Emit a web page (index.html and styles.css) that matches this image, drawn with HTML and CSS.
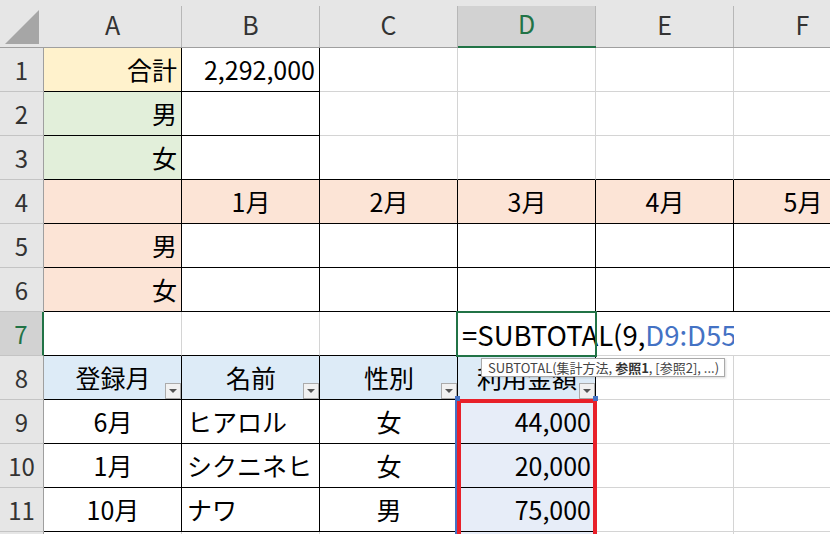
FILE: index.html
```html
<!DOCTYPE html>
<html lang="ja">
<head>
    <meta charset="UTF-8">
    <title>SUBTOTAL</title>
    <link rel="stylesheet" href="styles.css">
</head>
<body>
    <div class="sheet">
        <!-- 列見出し -->
        <div class="corner">
            <svg width="44" height="48" viewBox="0 0 44 48"><polygon points="39,10 39,44 5,44" fill="#a6a6a6"/></svg>
        </div>
        <div class="col-head"><span>A</span></div>
        <div class="col-head"><span>B</span></div>
        <div class="col-head"><span>C</span></div>
        <div class="col-head sel"><span>D</span></div>
        <div class="col-head"><span>E</span></div>
        <div class="col-head"><span>F</span></div>

        <!-- 1 -->
        <div class="row-head">1</div>
        <div class="c k yellow right">合計</div>
        <div class="c k right">2,292,000</div>
        <div class="c"></div>
        <div class="c"></div>
        <div class="c"></div>
        <div class="c"></div>

        <!-- 2 -->
        <div class="row-head">2</div>
        <div class="c k green right">男</div>
        <div class="c k"></div>
        <div class="c"></div>
        <div class="c"></div>
        <div class="c"></div>
        <div class="c"></div>

        <!-- 3 -->
        <div class="row-head">3</div>
        <div class="c k green right">女</div>
        <div class="c k"></div>
        <div class="c kb"></div>
        <div class="c kb"></div>
        <div class="c kb"></div>
        <div class="c kb"></div>

        <!-- 4 -->
        <div class="row-head">4</div>
        <div class="c k peach"></div>
        <div class="c k peach center">1月</div>
        <div class="c k peach center">2月</div>
        <div class="c k peach center">3月</div>
        <div class="c k peach center">4月</div>
        <div class="c k peach center">5月</div>

        <!-- 5 -->
        <div class="row-head">5</div>
        <div class="c k peach right">男</div>
        <div class="c k"></div>
        <div class="c k"></div>
        <div class="c k"></div>
        <div class="c k"></div>
        <div class="c k"></div>

        <!-- 6 -->
        <div class="row-head">6</div>
        <div class="c k peach right">女</div>
        <div class="c k"></div>
        <div class="c k"></div>
        <div class="c k"></div>
        <div class="c k"></div>
        <div class="c k"></div>

        <!-- 7 -->
        <div class="row-head sel">7</div>
        <div class="c kb"></div>
        <div class="c kb"></div>
        <div class="c kb"></div>
        <div class="c kb editing">
            <div class="editor">=SUBTOTAL(9,<span class="ref">D9:D55</span></div>
            <div class="active-box"></div>
        </div>
        <div class="c"></div>
        <div class="c"></div>

        <!-- 8 -->
        <div class="row-head">8</div>
        <div class="c k blue center">登録月<i class="filter"></i></div>
        <div class="c k blue center">名前<i class="filter"></i></div>
        <div class="c k blue center">性別<i class="filter"></i></div>
        <div class="c k blue center">利用金額<i class="filter"></i></div>
        <div class="c"></div>
        <div class="c"></div>

        <!-- 9 -->
        <div class="row-head">9</div>
        <div class="c k center">6月</div>
        <div class="c k">ヒアロル</div>
        <div class="c k center">女</div>
        <div class="c k picked right">44,000</div>
        <div class="c"></div>
        <div class="c"></div>

        <!-- 10 -->
        <div class="row-head">10</div>
        <div class="c k center">1月</div>
        <div class="c k">シクニネヒ</div>
        <div class="c k center">女</div>
        <div class="c k picked right">20,000</div>
        <div class="c"></div>
        <div class="c"></div>

        <!-- 11 -->
        <div class="row-head">11</div>
        <div class="c k center">10月</div>
        <div class="c k">ナワ</div>
        <div class="c k center">男</div>
        <div class="c k picked right">75,000</div>
        <div class="c"></div>
        <div class="c"></div>

        <!-- 12（画面下端で切れている行） -->
        <div class="row-head"></div>
        <div class="c"></div>
        <div class="c"></div>
        <div class="c"></div>
        <div class="c picked"></div>
        <div class="c"></div>
        <div class="c"></div>

        <!-- 参照範囲と注記 -->
        <div class="ref-range"></div>
        <div class="ref-handle left"></div>
        <div class="ref-handle right"></div>
        <div class="red-box"></div>
        <div class="tip">SUBTOTAL(集計方法, <b>参照1</b>, [参照2], ...)</div>
    </div>
</body>
</html>
```

FILE: styles.css
```css
body {
    margin: 0;
    width: 830px;
    height: 534px;
    overflow: hidden;
    background-color: white;
    font-family: "Noto Sans CJK JP", "Noto Sans", sans-serif;
}
.sheet {
    position: relative;
    display: grid;
    grid-template-columns: 44px repeat(6, 138px);
    grid-template-rows: 48px repeat(11, 44px) 42px;
    font-size: 25px;
    color: #000;
}
.corner {
    background-color: #e6e6e6;
    border-bottom: 1px solid #9f9f9f;
    box-sizing: border-box;
}
.corner svg {
    display: block;
}
.col-head {
    display: flex;
    padding-top: 6px;
    background-color: #e6e6e6;
    border-bottom: 1px solid #9f9f9f;
    box-sizing: border-box;
    color: #333;
}
.col-head span {
    flex: 1;
    display: flex;
    align-items: center;
    justify-content: center;
    border-right: 1px solid #b7b7b7;
    padding-bottom: 6px;
}
.col-head.sel {
    border-bottom: 2px solid #217346;
}
.col-head.sel span {
    background-color: #d2d2d2;
    color: #217346;
}
.row-head {
    display: flex;
    align-items: center;
    justify-content: center;
    background-color: #e6e6e6;
    border-right: 1px solid #9f9f9f;
    border-bottom: 1px solid #c4c4c4;
    box-sizing: border-box;
    color: #333;
    font-size: 24px;
}
.row-head.sel {
    background-color: #d2d2d2;
    border-right: 2px solid #217346;
    color: #217346;
}
.c {
    position: relative;
    display: flex;
    align-items: center;
    padding: 0 4px 1px 5px;
    border-right: 1px solid #d4d4d4;
    border-bottom: 1px solid #d4d4d4;
    box-sizing: border-box;
    white-space: nowrap;
}
.c.k {
    border-right-color: #000;
    border-bottom-color: #000;
}
.c.kb {
    border-bottom-color: #000;
}
.right {
    justify-content: flex-end;
}
.center {
    justify-content: center;
}
.yellow {
    background-color: #fff2cc;
}
.green {
    background-color: #e2efda;
}
.peach {
    background-color: #fce4d6;
}
.blue {
    background-color: #ddebf7;
}
.picked {
    background-color: #e7edf8;
}
.filter {
    position: absolute;
    right: 0;
    bottom: 0;
    width: 16px;
    height: 16px;
    box-sizing: border-box;
    border: 1px solid #ababab;
    background-color: #f1f1f1;
}
.filter::after {
    content: "";
    position: absolute;
    left: 3px;
    top: 5px;
    border-left: 4px solid transparent;
    border-right: 4px solid transparent;
    border-top: 4px solid #555;
}
.editing {
    z-index: 2;
}
.editor {
    position: absolute;
    left: 0;
    top: 0;
    width: 276px;
    height: 43px;
    padding-left: 4px;
    box-sizing: border-box;
    background-color: white;
    display: flex;
    align-items: center;
    overflow: hidden;
    white-space: nowrap;
    font-size: 27.5px;
}
.editor .ref {
    color: #4472c4;
}
.active-box {
    position: absolute;
    left: -2px;
    top: -1px;
    width: 141px;
    height: 46px;
    box-sizing: border-box;
    border: 2px solid #217346;
}
.ref-range {
    position: absolute;
    left: 455px;
    top: 399px;
    width: 4px;
    height: 140px;
    background-color: #4472c4;
    z-index: 3;
}
.ref-handle {
    position: absolute;
    top: 396px;
    width: 5px;
    height: 5px;
    background-color: #4472c4;
    z-index: 5;
}
.ref-handle.left {
    left: 455px;
}
.ref-handle.right {
    left: 593px;
}
.red-box {
    position: absolute;
    left: 457px;
    top: 399px;
    width: 140px;
    height: 150px;
    box-sizing: border-box;
    border: 4px solid #e8202a;
    z-index: 4;
}
.tip {
    position: absolute;
    left: 481px;
    top: 358px;
    width: 244px;
    height: 19px;
    box-sizing: border-box;
    padding-left: 6px;
    border: 1px solid #a9a9a9;
    background-color: white;
    box-shadow: 1px 1px 2px rgba(0,0,0,0.15);
    font-size: 13px;
    line-height: 17px;
    color: #444;
    white-space: nowrap;
    z-index: 6;
}
.tip b {
    color: #333;
}
```
